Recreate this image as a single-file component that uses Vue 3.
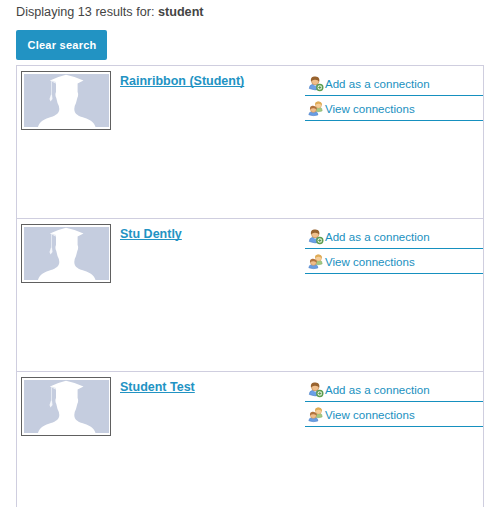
<script setup>
const people = ['Rainribbon (Student)', 'Stu Dently', 'Student Test']
</script>

<template>
  <main class="page">
    <p class="summary">Displaying 13 results for: <strong>student</strong></p>
    <button class="clear">Clear search</button>
    <ul class="results">
      <li v-for="name in people" :key="name" class="row">
        <div class="photo">
          <svg width="85" height="53" viewBox="0 0 85 53">
            <rect width="85" height="53" fill="#c5cddf" />
            <path fill="#fff" d="M14 53C15.500 47 21 45 27 43C32 41.500 35.300 39 35.300 35Q35.300 32 33.500 29L32.300 24C31.200 22 31.200 19.500 32 18V9.500L26 6.500Q34 2.500 42 .700Q51 2.500 59.500 6.500L53.600 9.500V18C54.400 19.500 54.400 22 53.300 24L52 29Q50.300 32 50.300 35C50.300 39 53 41.500 58 43C64 45 70 47 71.500 53Z" />
            <path d="M32 8.500L27.500 7V21" fill="none" stroke="#e3e8f1" stroke-width="1" />
            <path d="M27 20.500L25.500 25L26.500 27.500L28.500 25L28 21Z" fill="#f4f6fa" />
          </svg>
        </div>
        <div class="who"><a class="name">{{ name }}</a></div>
        <div class="actions">
          <a class="action">
            <svg class="icon" width="16" height="16" viewBox="0 0 16 16">
              <path d="M1.300 12.500Q1.300 8.700 5 8.200H9Q12.500 8.700 12.500 13.300Q7 14.800 1.300 12.500Z" fill="#6ba0e6" stroke="#4c7fc4" stroke-width=".6" />
              <path d="M5.500 8.200L7.200 10.300L8.900 8.200Z" fill="#e8f0fa" />
              <circle cx="7.200" cy="5.200" r="3.700" fill="#f0bf8c" stroke="#b07840" stroke-width=".5" />
              <path d="M3 5.500C2.300 1.500 4.700 .400 7.500 .600C10.900 .800 12 3.500 11.100 5.500Q9.700 3.700 7 3.800Q4.500 3.700 3 5.500Z" fill="#98632f" />
              <circle cx="11.800" cy="11.500" r="3" fill="#e9f4e3" stroke="#5c9c4e" stroke-width="1.400" />
              <path d="M11.800 10V13M10.300 11.500H13.300" stroke="#5c9c4e" stroke-width="1" />
            </svg>
            <span>Add as a connection</span>
          </a>
          <a class="action">
            <svg class="icon" width="16" height="16" viewBox="0 0 16 16">
              <path d="M7 10.300Q7 7 9.500 6.300H12Q14.400 7 14.200 9.900Q11.500 11.300 7 10.300Z" fill="#a3c883" stroke="#86ad68" stroke-width=".5" />
              <circle cx="10.500" cy="4" r="3.100" fill="#f6cd98" stroke="#cf9c57" stroke-width=".4" />
              <path d="M7.200 4.300C6.700 .900 8.500 .300 10.800 .400C13.600 .600 14.300 2.500 13.700 4.500Q12.700 2.600 10.500 2.800Q8.500 2.600 7.200 4.300Z" fill="#dfac56" />
              <path d="M.800 13.800Q.800 11 4 10.400H7Q10 11 9.900 14Q5.500 15.500 .800 13.800Z" fill="#699de3" stroke="#4c7fc4" stroke-width=".5" />
              <circle cx="5.400" cy="8.400" r="3" fill="#f0bd8b" stroke="#b07840" stroke-width=".4" />
              <path d="M2.100 8.700C1.600 5.300 3.600 4.700 5.700 4.900C8.400 5.100 9.200 6.800 8.600 8.800Q7.600 7.100 5.500 7.300Q3.400 7.100 2.100 8.700Z" fill="#b0723e" />
            </svg>
            <span>View connections</span>
          </a>
        </div>
      </li>
    </ul>
  </main>
</template>

<style>
body {
  margin: 0;
  background: #fff;
  overflow: hidden;
}
</style>

<style scoped>
.page {
  box-sizing: border-box;
  height: 507px;
  overflow: hidden;
  padding: 5px 16px 0;
  font-family: "Liberation Sans", Arial, sans-serif;
  color: #444;
}
.summary {
  margin: 0 0 10px;
  font-size: 12.65px;
  line-height: 15px;
}
.clear {
  display: block;
  width: 91px;
  height: 30px;
  padding: 0 0 0 1px;
  border: 0;
  border-radius: 2px;
  background: #2293c3;
  color: #fff;
  font: bold 11px/30px "Liberation Sans", Arial, sans-serif;
  letter-spacing: 0.25px;
}
.results {
  list-style: none;
  margin: 5px 0 0;
  padding: 0;
  border: 1px solid #cfcedf;
}
.row {
  box-sizing: border-box;
  height: 153px;
  display: flex;
  padding: 5px 0 0 4px;
  border-bottom: 1px solid #cfcedf;
}
.photo {
  box-sizing: border-box;
  width: 90px;
  height: 59px;
  padding: 2px 1px 2px 2px;
  border: 1px solid #606060;
}
.photo svg {
  display: block;
}
.who {
  flex: 1;
  padding: 1px 0 0 9px;
}
.name {
  display: block;
  color: #2293c3;
  font-size: 12.5px;
  font-weight: bold;
  line-height: 18px;
  text-decoration: underline;
  text-decoration-thickness: 1px;
  text-decoration-skip-ink: none;
  text-underline-offset: 1px;
}
.actions {
  width: 178px;
}
.action {
  box-sizing: border-box;
  height: 25px;
  display: flex;
  align-items: center;
  padding: 2px 0 0 3px;
  border-bottom: 1px solid #1690bf;
  color: #1990c0;
  font-size: 11.55px;
  line-height: 14px;
}
.icon {
  flex: none;
  margin-right: 1px;
}
</style>
